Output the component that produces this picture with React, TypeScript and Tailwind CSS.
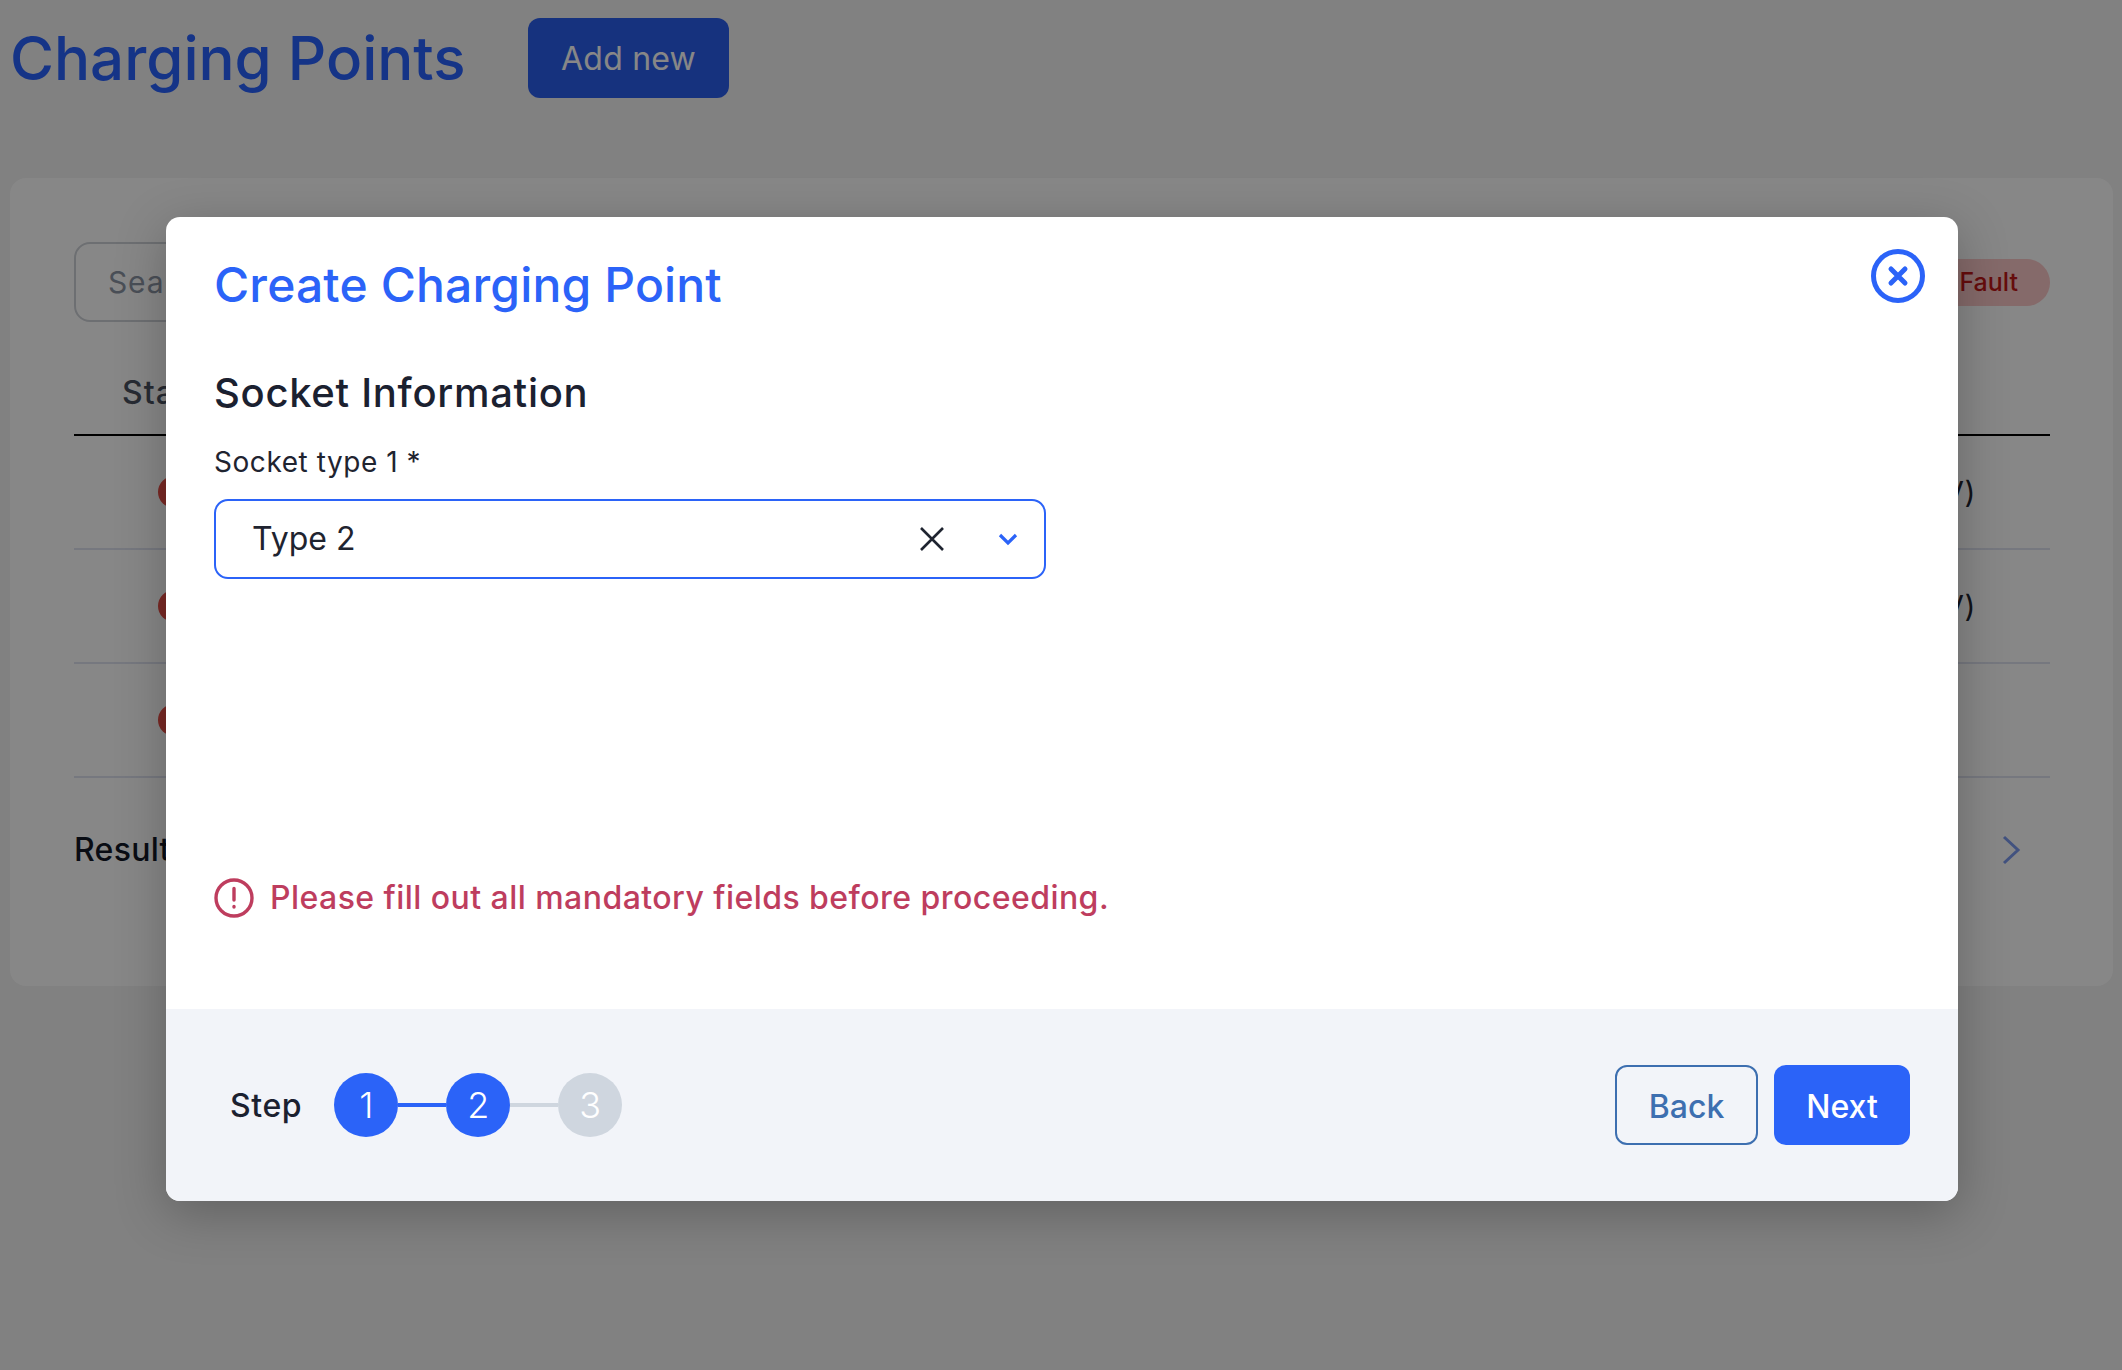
// App.tsx
const FONT = "font-['Inter','Noto_Sans',sans-serif]";

function BackgroundRow({ volt }: { volt?: boolean }) {
  return (
    <div className="flex h-[114px] items-center border-b-2 border-[#dfe2f0] pl-[84px] pr-[74px]">
      <span className="h-8 w-8 rounded-full bg-[#e64f46]" />
      {volt && <span className="ml-auto text-[30px] tracking-[0.5px] text-[#1f2430]">(230V)</span>}
    </div>
  );
}

function StepDot({ n, active }: { n: number; active: boolean }) {
  return (
    <div
      className={`flex h-16 w-16 items-center justify-center rounded-full text-[36px] font-light text-white ${
        active ? "bg-[#2b63f8]" : "bg-[#cfd6df]"
      }`}
    >
      {n}
    </div>
  );
}

export default function App() {
  return (
    <div className={`relative h-[1370px] w-[2122px] overflow-hidden bg-[#f3f3f3] ${FONT}`}>
      {/* Page behind the dialog */}
      <div className="flex items-center gap-[65px] pl-[10px] pt-[18px]">
        <h1 className="w-[453px] whitespace-nowrap text-[60px] font-medium leading-[80px] tracking-[0px] text-[#2962ff]">Charging Points</h1>
        <button className="h-20 w-[201px] rounded-xl bg-[#2b5fef] pt-[2px] text-[32px] tracking-[0.2px] text-white">Add new</button>
      </div>

      <div className="ml-[10px] mr-[9px] mt-[80px] h-[808px] rounded-2xl bg-white pl-[64px] pr-[63px] pt-[64px]">
        <div className="flex items-center justify-between">
          <div className="flex h-[80px] w-[500px] items-center rounded-2xl border-2 border-[#cfd2d8] pl-8 text-[30px] tracking-[0.8px] text-[#8c95a5]">
            Search
          </div>
          <span className="flex h-[47px] w-[200px] items-center justify-end rounded-full bg-[#fcc8c8] pr-8 pt-[1px] text-[25px] font-medium text-[#c01818]">
            Fault
          </span>
        </div>
        <div className="flex h-[114px] items-end border-b-2 border-black pb-[17px] pl-[48px] text-[32px] font-medium tracking-[1px] text-[#4a5160]">
          Status
        </div>
        <BackgroundRow volt />
        <BackgroundRow volt />
        <BackgroundRow />
        <div className="flex items-center justify-between pt-[52px]">
          <span className="text-[32px] font-medium leading-10 tracking-[0.3px] text-[#111827]">Results</span>
          <svg width="24" height="32" viewBox="0 0 24 32" fill="none" stroke="#7d9cf0" strokeWidth="3" className="mr-[28px]">
            <path d="M6 3l14 13L6 29" />
          </svg>
        </div>
      </div>

      {/* Dialog overlay */}
      <div className="absolute inset-0 bg-black/[0.47] pl-[166px] pt-[217px]">
        <div className="relative w-[1792px] overflow-hidden rounded-[14px] bg-white shadow-[0_12px_50px_rgba(0,0,0,0.25)]">
          <div className="h-[792px] px-[48px] pt-[36px]">
            <h2 className="text-[48px] font-medium leading-[64px] tracking-[0.15px] text-[#2b63f8]">Create Charging Point</h2>
            <h3 className="mt-[50px] text-[40px] font-medium leading-[52px] tracking-[0.7px] text-[#1b2130]">Socket Information</h3>
            <label className="mt-[25px] block text-[28px] leading-9 tracking-[0.55px] text-[#1f2430]">Socket type 1 *</label>
            <div className="mt-[19px] flex h-20 w-[832px] items-center rounded-[14px] border-2 border-[#2b63f8] pl-[36px] pr-[26px] text-[32px] text-[#1f2430]">
              <span>Type 2</span>
              <svg width="26" height="26" viewBox="0 0 26 26" fill="none" stroke="#1f2430" strokeWidth="2.6" className="ml-auto mr-[53px]">
                <path d="M2 2l22 22M24 2L2 24" />
              </svg>
              <svg width="20" height="13" viewBox="0 0 20 13" fill="none" stroke="#2b63f8" strokeWidth="3.2">
                <path d="M2 2l8 8 8-8" />
              </svg>
            </div>
            <div className="mt-[299px] flex items-center gap-4 text-[32px] font-medium leading-10 tracking-[0.45px] text-[#be3d5e]">
              <svg width="40" height="40" viewBox="0 0 40 40" fill="none" stroke="currentColor" strokeWidth="3.4" strokeLinecap="round">
                <circle cx="20" cy="20" r="18" />
                <path d="M20 10.5v11.5M20 28.5v.5" />
              </svg>
              <span>Please fill out all mandatory fields before proceeding.</span>
            </div>
          </div>

          <div className="flex h-[192px] items-center justify-between bg-[#f2f4f9] pl-[64px] pr-[48px]">
            <div className="flex items-center">
              <span className="mr-[32px] pt-[2px] text-[32px] font-medium tracking-[0.6px] text-[#1b2130]">Step</span>
              <StepDot n={1} active />
              <span className="h-1 w-12 bg-[#2b63f8]" />
              <StepDot n={2} active />
              <span className="h-1 w-12 bg-[#cfd6df]" />
              <StepDot n={3} active={false} />
            </div>
            <div className="flex gap-4">
              <button className="h-20 w-[143px] rounded-xl border-2 border-[#3d6fb0] pt-[3px] text-[32px] font-medium text-[#3d6fb0]">Back</button>
              <button className="h-20 w-[136px] rounded-xl bg-[#2b63f8] pt-[3px] text-[32px] font-medium text-white">Next</button>
            </div>
          </div>

          <button className="absolute right-[33px] top-[32px]">
            <svg width="54" height="54" viewBox="0 0 54 54" fill="none" stroke="#2b63f8" strokeLinecap="round" className="block">
              <circle cx="27" cy="27" r="24.5" strokeWidth="5" />
              <path d="M20 20l14 14M34 20L20 34" strokeWidth="5" />
            </svg>
          </button>
        </div>
      </div>
    </div>
  );
}
